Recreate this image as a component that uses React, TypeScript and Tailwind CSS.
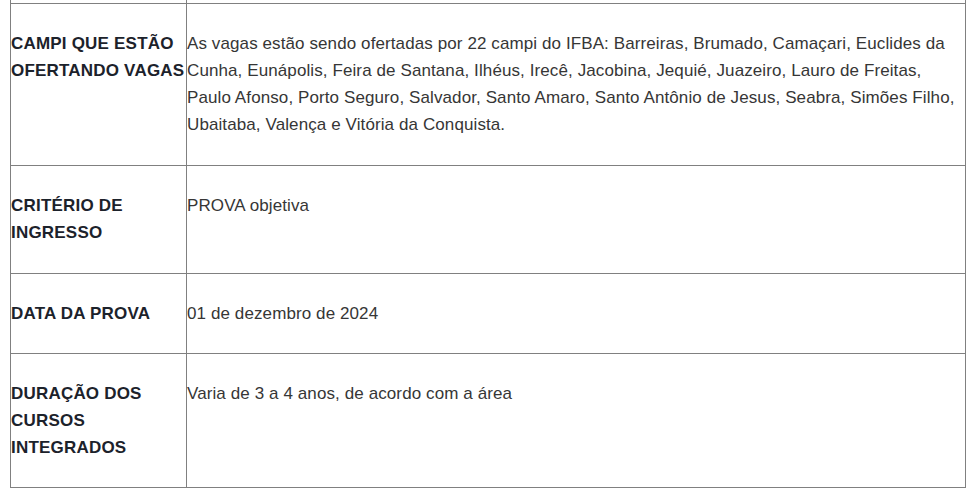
const rows: { label: string[]; value: string[]; pb: string }[] = [
  {
    label: ["CAMPI QUE ESTÃO", "OFERTANDO VAGAS"],
    value: [
      "As vagas estão sendo ofertadas por 22 campi do IFBA: Barreiras, Brumado, Camaçari, Euclides da",
      "Cunha, Eunápolis, Feira de Santana, Ilhéus, Irecê, Jacobina, Jequié, Juazeiro, Lauro de Freitas,",
      "Paulo Afonso, Porto Seguro, Salvador, Santo Amaro, Santo Antônio de Jesus, Seabra, Simões Filho,",
      "Ubaitaba, Valença e Vitória da Conquista.",
    ],
    pb: "pb-[27px]",
  },
  { label: ["CRITÉRIO DE", "INGRESSO"], value: ["PROVA objetiva"], pb: "pb-[27px]" },
  { label: ["DATA DA PROVA"], value: ["01 de dezembro de 2024"], pb: "pb-[26px]" },
  {
    label: ["DURAÇÃO DOS", "CURSOS", "INTEGRADOS"],
    value: ["Varia de 3 a 4 anos, de acordo com a área"],
    pb: "pb-[26px]",
  },
];

export default function App() {
  return (
    <div className="h-[492px] w-[975px] overflow-hidden bg-white font-['Liberation_Sans',Arial,sans-serif] text-[17px] leading-[27px]">
      <div className="ml-[10px] grid w-[956px] grid-cols-[175px_1fr] border-x border-b border-[#808080]">
        {/* tail of the previous row, cut off by the screenshot */}
        <div className="h-[3px]" />
        <div className="h-[3px] border-l border-[#808080]" />
        {rows.map((row) => (
          <div key={row.label[0]} className="contents">
            <div className={`border-t border-[#808080] pt-[26px] ${row.pb} font-bold tracking-[0.2px] text-[#1c222b]`}>
              {row.label.map((line) => (
                <div key={line} className="whitespace-nowrap">
                  {line}
                </div>
              ))}
            </div>
            <div className={`border-t border-l border-[#808080] pt-[26px] ${row.pb} tracking-[0.1px] text-[#363636]`}>
              {row.value.map((line) => (
                <div key={line} className="whitespace-nowrap">
                  {line}
                </div>
              ))}
            </div>
          </div>
        ))}
      </div>
    </div>
  );
}
